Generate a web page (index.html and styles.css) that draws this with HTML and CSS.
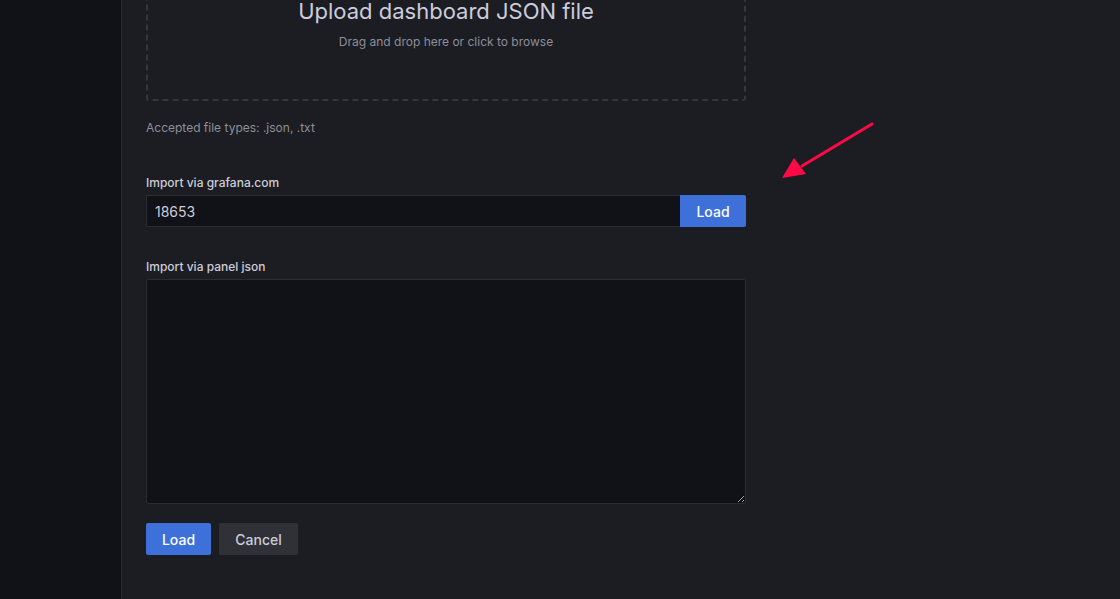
FILE: index.html
```html
<!DOCTYPE html>
<html lang="en">
<head>
<meta charset="utf-8">
<title>Import dashboard</title>
<link rel="stylesheet" href="styles.css">
</head>
<body>
<div class="app">
  <aside class="sidebar"></aside>
  <main class="main">
    <div class="content">
      <div class="dropzone">
        <div class="dz-title">Upload dashboard JSON file</div>
        <div class="dz-sub">Drag and drop here or click to browse</div>
      </div>
      <div class="hint">Accepted file types: .json, .txt</div>

      <div class="field gcom">
        <label class="label">Import via grafana.com</label>
        <div class="input-row">
          <input class="input" type="text" value="18653">
          <button class="btn primary addon">Load</button>
        </div>
      </div>

      <div class="field panel">
        <label class="label">Import via panel json</label>
        <textarea class="textarea"></textarea>
      </div>

      <div class="actions">
        <button class="btn primary">Load</button>
        <button class="btn secondary">Cancel</button>
      </div>
    </div>
    <svg class="arrow" width="110" height="70" viewBox="0 0 110 70">
      <line x1="102" y1="9" x2="32" y2="51" stroke="#ff0a47" stroke-width="3" stroke-linecap="round"/>
      <polygon points="12,63 24,43 36,59" fill="#ff0a47"/>
    </svg>
  </main>
</div>
</body>
</html>
```

FILE: styles.css
```css
* { box-sizing: border-box; }
html, body {
  margin: 0;
  padding: 0;
  height: 100%;
  overflow: hidden;
  background: #181b1f;
  font-family: Inter, "Noto Sans", sans-serif;
  color: #ccccdc;
}
.app {
  display: flex;
  height: 599px;
}
.sidebar {
  width: 122px;
  flex: none;
  background: #111217;
  border-right: 1px solid #25272c;
}
.main {
  flex: 1;
  position: relative;
  background: #1b1d22;
}
.content {
  width: 648px;
  padding: 0 24px;
}
.dropzone {
  margin-top: -40px;
  border: 2px dashed #34363d;
  border-radius: 3px;
  padding: 35px 0 49px;
  text-align: center;
}
.dz-title {
  font-size: 22px;
  line-height: 28px;
  color: #ccccdc;
  font-weight: 400;
}
.dz-sub {
  margin-top: 9px;
  font-size: 12px;
  line-height: 16px;
  color: #8e8e9a;
}
.hint {
  margin-top: 19px;
  font-size: 12px;
  line-height: 16px;
  color: #8e8e9a;
}
.field { display: flex; flex-direction: column; }
.gcom { margin-top: 39px; }
.panel { margin-top: 32px; }
.label {
  font-size: 12px;
  line-height: 16px;
  font-weight: 500;
  color: #ccccdc;
  margin-bottom: 4px;
}
.input-row { display: flex; height: 32px; }
.input {
  flex: 1;
  min-width: 0;
  height: 32px;
  background: #111217;
  border: 1px solid #2b2d33;
  border-right: none;
  border-radius: 2px 0 0 2px;
  color: #ccccdc;
  font-family: Inter, "Noto Sans", sans-serif;
  font-size: 14px;
  padding: 0 8px;
  outline: none;
}
.btn {
  height: 32px;
  border: none;
  border-radius: 2px;
  font-family: Inter, "Noto Sans", sans-serif;
  font-size: 14px;
  font-weight: 500;
  padding: 0 16px;
  cursor: pointer;
}
.primary { background: #3d71d9; color: #ffffff; }
.secondary { background: #2f3136; color: #ccccdc; }
.addon { width: 66px; border-radius: 0 2px 2px 0; padding: 0; }
.textarea {
  height: 225px;
  background: #111217;
  border: 1px solid #2b2d33;
  border-radius: 2px;
  resize: vertical;
  color: #ccccdc;
  outline: none;
}
.actions {
  margin-top: 19px;
  display: flex;
  gap: 8px;
}
.actions .primary { width: 65px; padding: 0; }
.actions .secondary { width: 79px; padding: 0; }
.arrow {
  position: absolute;
  left: 648px;
  top: 115px;
}
```
